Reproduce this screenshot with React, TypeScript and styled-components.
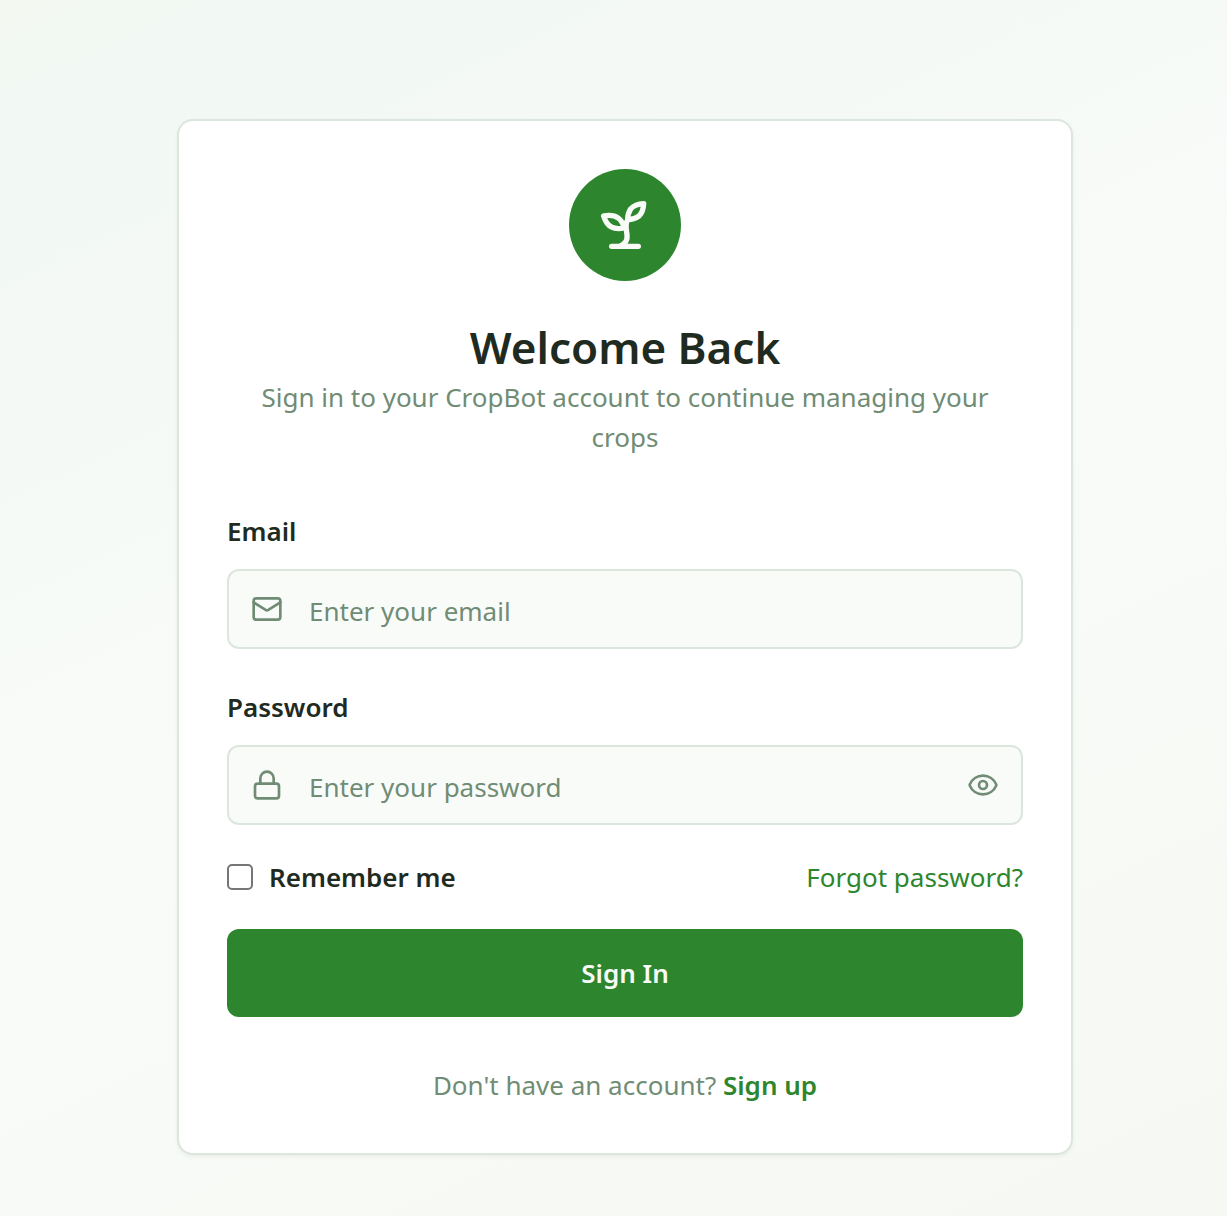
import React, { useState } from "react";
import styled, { createGlobalStyle } from "styled-components";
import { Mail, Lock, Eye, EyeOff } from "lucide-react";

const colors = {
  primary: "#2d862d",
  text: "#1f2b20",
  muted: "#708c74",
  border: "#dbe6dd",
  field: "#f9fbf9",
  onPrimary: "#f9fbf9",
};

const GlobalStyle = createGlobalStyle`
  *, *::before, *::after { box-sizing: border-box; }
  body {
    margin: 0;
    color: ${colors.text};
    font-family: "Noto Sans", "Open Sans", sans-serif;
    font-size: 26px;
    line-height: 40px;
  }
`;

const Page = styled.main`
  display: flex;
  align-items: center;
  justify-content: center;
  min-height: 100vh;
  padding: 119px 154px 61px 177px;
  background: linear-gradient(155deg, #f3f8f1 0%, #f2f8f4 8%, #f9fbf9 50%, #f6f8f3 100%);
`;

const Card = styled.section`
  width: 100%;
  max-width: 896px;
  padding: 48px;
  border: 2px solid ${colors.border};
  border-radius: 16px;
  background: #ffffff;
  box-shadow: 0 2px 4px rgba(0, 0, 0, 0.05);
`;

const Header = styled.header`
  display: flex;
  flex-direction: column;
  align-items: center;
  text-align: center;
`;

const Logo = styled.div`
  display: grid;
  place-items: center;
  width: 112px;
  height: 112px;
  margin-bottom: 36px;
  border-radius: 50%;
  background: ${colors.primary};
  color: ${colors.onPrimary};
`;

const Title = styled.h1`
  margin: 0;
  font-size: 44px;
  font-weight: 600;
  line-height: 60px;
`;

const Subtitle = styled.p`
  margin: 0;
  color: ${colors.muted};
`;

const Form = styled.form`
  display: flex;
  flex-direction: column;
  gap: 32px;
  margin-top: 56px;
`;

const Fields = styled.div`
  display: flex;
  flex-direction: column;
  gap: 40px;
`;

const Field = styled.div`
  display: flex;
  flex-direction: column;
  gap: 20px;
`;

const Label = styled.label`
  font-weight: 600;
  line-height: 36px;
`;

const InputBox = styled.div`
  display: flex;
  align-items: center;
  gap: 26px;
  height: 80px;
  padding: 0 22px;
  border: 2px solid ${colors.border};
  border-radius: 12px;
  background: ${colors.field};
  color: ${colors.muted};
`;

const Input = styled.input`
  flex: 1;
  min-width: 0;
  padding: 4px 0 0;
  border: 0;
  outline: 0;
  background: transparent;
  color: ${colors.text};
  font: inherit;

  &::placeholder {
    color: ${colors.muted};
    opacity: 1;
  }
`;

const IconButton = styled.button`
  display: flex;
  padding: 0;
  border: 0;
  background: transparent;
  color: inherit;
  cursor: pointer;
`;

const Options = styled.div`
  display: flex;
  align-items: center;
  justify-content: space-between;
`;

const Remember = styled.div`
  display: flex;
  align-items: center;
  gap: 16px;
`;

const Checkbox = styled.input`
  appearance: none;
  width: 26px;
  height: 26px;
  margin: 0;
  border: 2px solid #767676;
  border-radius: 5px;
  background: #ffffff;

  &:checked {
    border-color: ${colors.primary};
    background: ${colors.primary};
    box-shadow: inset 0 0 0 4px #ffffff;
  }
`;

const TextLink = styled.a<{ $strong?: boolean }>`
  color: ${colors.primary};
  font-weight: ${(p) => (p.$strong ? 600 : 400)};
  text-decoration: none;
`;

const Submit = styled.button`
  height: 88px;
  border: 0;
  border-radius: 12px;
  background: ${colors.primary};
  color: ${colors.onPrimary};
  font: inherit;
  font-weight: 600;
  cursor: pointer;
`;

const Footer = styled.p`
  margin: 48px 0 0;
  color: ${colors.muted};
  text-align: center;
`;

function SproutIcon() {
  return (
    <svg
      width="64"
      height="64"
      viewBox="0 0 24 24"
      fill="none"
      stroke="currentColor"
      strokeWidth="2"
      strokeLinecap="round"
      strokeLinejoin="round"
      aria-hidden="true"
    >
      <path d="M7 20h10" />
      <path d="M10 20c5.5-2.5.8-6.4 3-10" />
      <path d="M9.5 9.4c1.1.8 1.8 2.2 2.3 3.7-2 .4-3.5.4-4.8-.3-1.2-.6-2.3-1.9-3-4.2 2.8-.5 4.4 0 5.5.8z" />
      <path d="M14.1 6a7 7 0 0 0-1.1 4c1.9-.1 3.3-.6 4.3-1.4 1-1 1.6-2.3 1.7-4.6-2.7.1-4 1-4.9 2z" />
    </svg>
  );
}

export default function App() {
  const [visible, setVisible] = useState(false);
  return (
    <>
      <GlobalStyle />
      <Page>
        <Card>
          <Header>
            <Logo>
              <SproutIcon />
            </Logo>
            <Title>Welcome Back</Title>
            <Subtitle>Sign in to your CropBot account to continue managing your crops</Subtitle>
          </Header>
          <Form onSubmit={(e) => e.preventDefault()}>
            <Fields>
              <Field>
                <Label htmlFor="email">Email</Label>
                <InputBox>
                  <Mail size={32} aria-hidden />
                  <Input id="email" type="email" placeholder="Enter your email" />
                </InputBox>
              </Field>
              <Field>
                <Label htmlFor="password">Password</Label>
                <InputBox>
                  <Lock size={32} aria-hidden />
                  <Input id="password" type={visible ? "text" : "password"} placeholder="Enter your password" />
                  <IconButton type="button" aria-label="Toggle password visibility" onClick={() => setVisible(!visible)}>
                    {visible ? <EyeOff size={32} /> : <Eye size={32} />}
                  </IconButton>
                </InputBox>
              </Field>
            </Fields>
            <Options>
              <Remember>
                <Checkbox id="remember" type="checkbox" />
                <Label htmlFor="remember">Remember me</Label>
              </Remember>
              <TextLink href="#forgot">Forgot password?</TextLink>
            </Options>
            <Submit type="submit">Sign In</Submit>
          </Form>
          <Footer>
            Don't have an account? <TextLink href="#signup" $strong>Sign up</TextLink>
          </Footer>
        </Card>
      </Page>
    </>
  );
}
